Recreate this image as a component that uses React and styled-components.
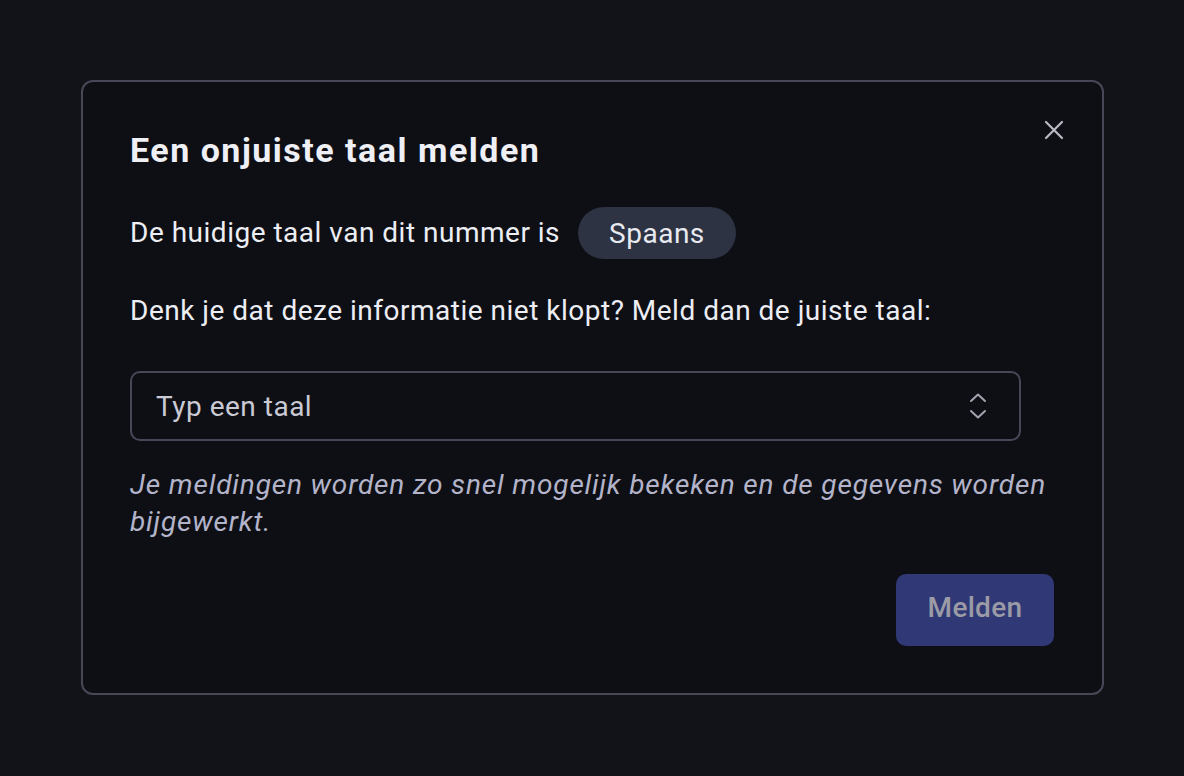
import React from "react";
import styled, { createGlobalStyle } from "styled-components";

const Global = createGlobalStyle`
  html, body { margin: 0; padding: 0; background: #121318; }
  body { font-family: Roboto, "Noto Sans", sans-serif; }
  * { box-sizing: border-box; }
`;

const Page = styled.div`
  width: 1184px;
  height: 776px;
  display: flex;
  align-items: flex-start;
  justify-content: flex-start;
  padding: 80px 0 0 81px;
`;

const Dialog = styled.div`
  position: relative;
  width: 1023px;
  height: 615px;
  background: #0e0f15;
  border: 2px solid #474857;
  border-radius: 12px;
  padding: 48px 48px 0 47px;
  display: flex;
  flex-direction: column;
  color: #eceef4;
`;

const Title = styled.h2`
  margin: 0;
  font-size: 34px;
  font-weight: 700;
  line-height: 40px;
  color: #eef0f6;
  letter-spacing: 1.5px;
`;

const Close = styled.button`
  position: absolute;
  top: 34px;
  right: 34px;
  width: 28px;
  height: 28px;
  padding: 0;
  border: 0;
  background: none;
  color: #b8bac4;
  display: flex;
  align-items: center;
  justify-content: center;
`;

const Row = styled.div`
  display: flex;
  align-items: center;
  gap: 18px;
  margin-top: ${(p) => p.$mt || 0}px;
`;

const Text = styled.p`
  margin: 0;
  font-size: 28px;
  line-height: 36px;
  letter-spacing: 0.5px;
  color: #eceef4;
`;

const Pill = styled.span`
  display: inline-flex;
  align-items: center;
  height: 52px;
  padding: 0 31px;
  border-radius: 26px;
  background: #2d3342;
  font-size: 28px;
  letter-spacing: 0.5px;
  color: #e8eaf2;
`;

const Select = styled.div`
  margin-top: 42px;
  width: 891px;
  height: 70px;
  border: 2px solid #474857;
  border-radius: 10px;
  display: flex;
  align-items: center;
  justify-content: space-between;
  padding: 0 32px 0 24px;
  font-size: 28px;
  letter-spacing: 0.5px;
  color: #c9cad4;
`;

const Note = styled.p`
  margin: 25px 0 0 0;
  font-size: 28px;
  line-height: 37px;
  letter-spacing: 0.85px;
  font-style: italic;
  color: #b3b4c9;
`;

const Footer = styled.div`
  display: flex;
  justify-content: flex-end;
  margin-top: 34px;
`;

const Button = styled.button`
  width: 158px;
  height: 72px;
  border: 0;
  border-radius: 10px;
  background: #303876;
  color: #9b9ba6;
  font-family: inherit;
  font-size: 28px;
  line-height: 1;
  padding: 0 0 4px 0;
  letter-spacing: 0.3px;
  font-weight: 500;
`;

export default function App() {
  return (
    <>
      <Global />
      <Page>
        <Dialog>
          <Close aria-label="Sluiten">
            <svg width="22" height="22" viewBox="0 0 22 22" fill="none" stroke="currentColor" strokeWidth="2.2" strokeLinecap="round">
              <path d="M3 3L19 19M19 3L3 19" />
            </svg>
          </Close>
          <Title>Een onjuiste taal melden</Title>
          <Row $mt={37}>
            <Text>De huidige taal van dit nummer is</Text>
            <Pill>Spaans</Pill>
          </Row>
          <Row $mt={34}>
            <Text>Denk je dat deze informatie niet klopt? Meld dan de juiste taal:</Text>
          </Row>
          <Select>
            <span>Typ een taal</span>
            <svg width="18" height="26" viewBox="0 0 18 26" fill="none" stroke="#a3a4b0" strokeWidth="2" strokeLinecap="round" strokeLinejoin="round">
              <path d="M2 8L9 1.5L16 8" />
              <path d="M2 18L9 24.5L16 18" />
            </svg>
          </Select>
          <Note>Je meldingen worden zo snel mogelijk bekeken en de gegevens worden bijgewerkt.</Note>
          <Footer>
            <Button>Melden</Button>
          </Footer>
        </Dialog>
      </Page>
    </>
  );
}
